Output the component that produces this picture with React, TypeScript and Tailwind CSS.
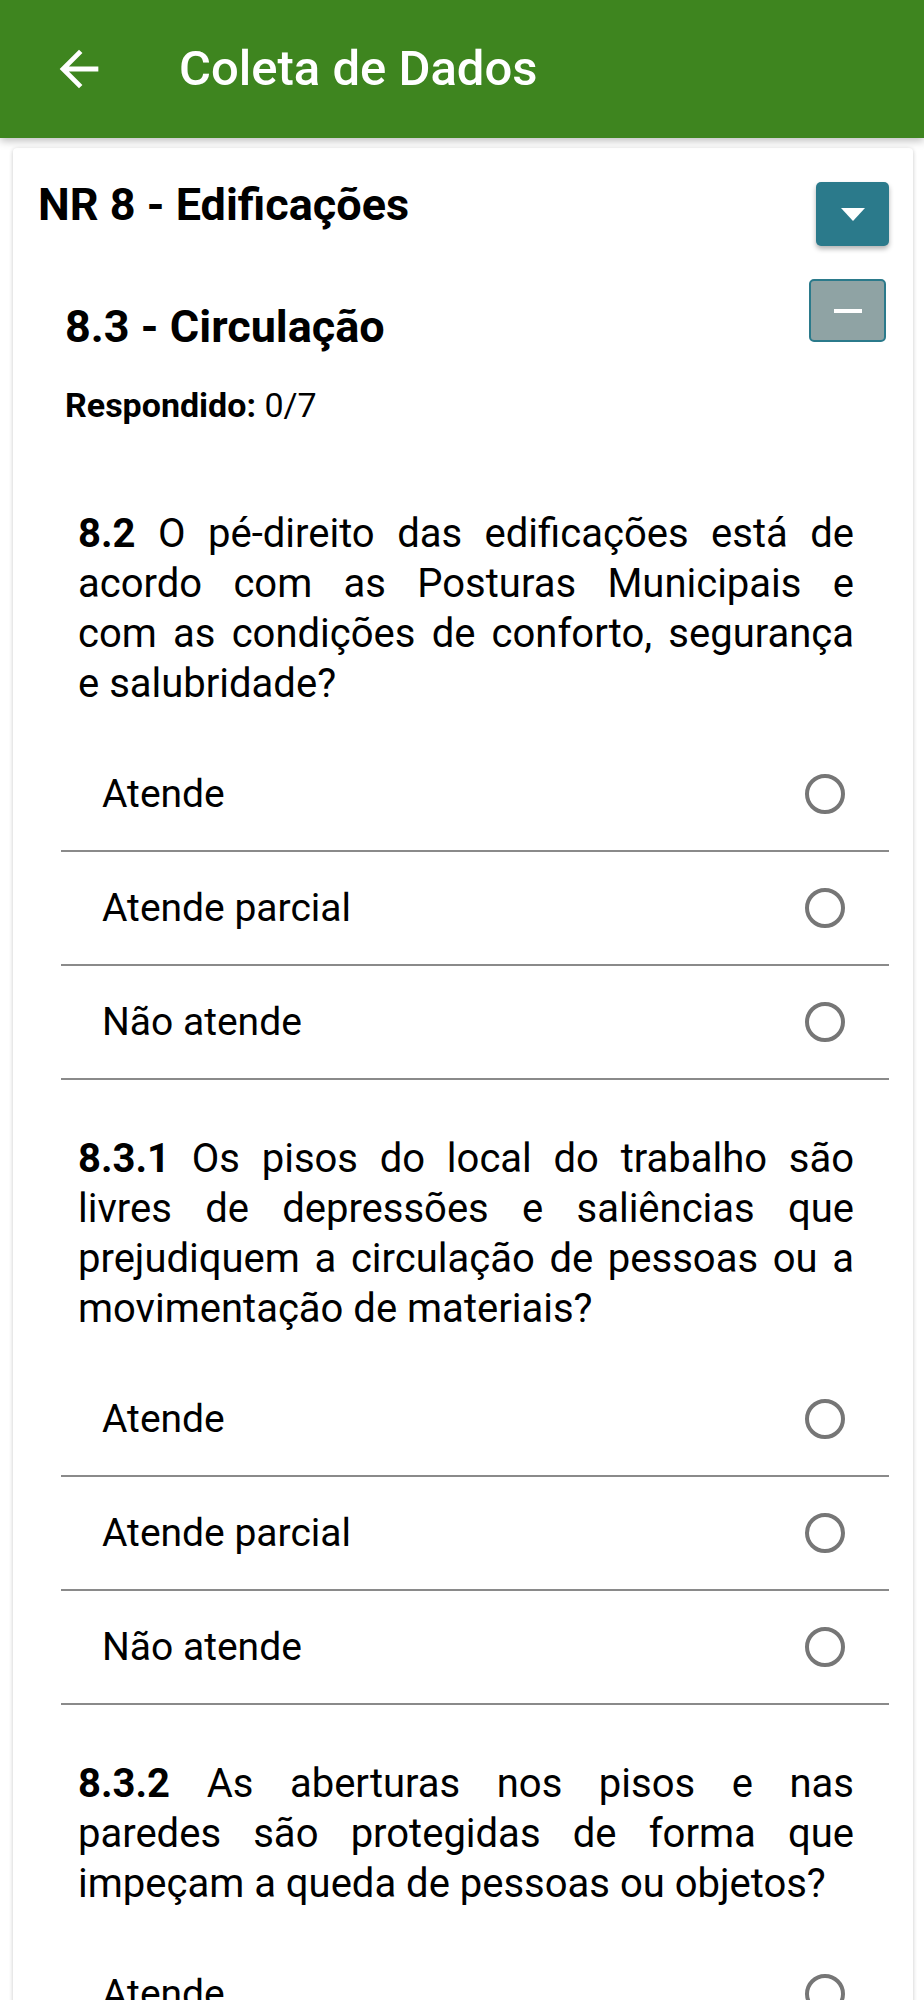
const questions = [
  {
    code: '8.2',
    lines: [
      'O pé-direito das edificações está de',
      'acordo com as Posturas Municipais e',
      'com as condições de conforto, segurança',
      'e salubridade?',
    ],
  },
  {
    code: '8.3.1',
    lines: [
      'Os pisos do local do trabalho são',
      'livres de depressões e saliências que',
      'prejudiquem a circulação de pessoas ou a',
      'movimentação de materiais?',
    ],
  },
  {
    code: '8.3.2',
    lines: [
      'As aberturas nos pisos e nas',
      'paredes são protegidas de forma que',
      'impeçam a queda de pessoas ou objetos?',
    ],
  },
];

const options = ['Atende', 'Atende parcial', 'Não atende'];

function Question({ code, lines, first }: { code: string; lines: string[]; first: boolean }) {
  return (
    <div className={first ? 'mt-[87px]' : 'mt-[54px]'}>
      <div className="pl-[17px] pr-[35px] mb-[29px] text-[40px] leading-[50px] text-black">
        {lines.map((line, i) => (
          <div
            key={i}
            className={i < lines.length - 1 ? 'whitespace-nowrap text-justify [text-align-last:justify]' : 'whitespace-nowrap'}
          >
            {i === 0 && <span className="font-bold">{code} </span>}
            {line}
          </div>
        ))}
      </div>
      {options.map((opt) => (
        <div
          key={opt}
          className="h-[114px] flex items-center justify-between pl-[41px] pr-[44px] border-b-2 border-[#8a8a8a]"
        >
          <span className="text-[39px] text-black">{opt}</span>
          <span className="w-[40px] h-[40px] rounded-full border-[4px] border-[#767676]" />
        </div>
      ))}
    </div>
  );
}

export default function App() {
  return (
    <div className="min-h-screen bg-white font-['Roboto',sans-serif]">
      <header className="relative z-10 h-[138px] bg-[#3e851f] flex items-center shadow-[0_3px_8px_rgba(0,0,0,0.25)]">
        <svg width="58" height="58" viewBox="0 0 24 24" className="ml-[50px]" fill="white">
          <path d="M20 11H7.83l5.59-5.59L12 4l-8 8 8 8 1.41-1.41L7.83 13H20v-2z" />
        </svg>
        <h1 className="ml-[71px] text-[49px] font-medium text-white">Coleta de Dados</h1>
      </header>

      <div className="mx-[13px] mt-[10px] mr-[11px] bg-white rounded-[4px] shadow-[0_1px_4px_rgba(0,0,0,0.22)] pl-[25px] pr-[24px] pt-[34px] pb-10">
        <div className="flex items-start justify-between">
          <h2 className="text-[45px] leading-[45px] font-bold text-black">NR 8 - Edificações</h2>
          <button className="w-[73px] h-[64px] rounded-[5px] bg-[#2b7a8b] flex items-center justify-center shadow-[0_3px_5px_rgba(0,0,0,0.3)]">
            <svg width="24" height="13" viewBox="0 0 24 13">
              <path d="M0 0h24L12 13z" fill="white" />
            </svg>
          </button>
        </div>

        <div className="ml-[27px]">
          <div className="mt-[33px] flex items-start justify-between">
            <h3 className="mt-[25px] text-[45px] leading-[45px] font-bold text-black">8.3 - Circulação</h3>
            <button className="mr-[3px] w-[77px] h-[63px] rounded-[5px] bg-[#8fa3a4] border-2 border-[#2b7a8b] flex items-center justify-center">
              <span className="block w-[28px] h-[4px] bg-white" />
            </button>
          </div>
          <p className="mt-[39px] text-[34px] leading-[34px] text-black">
            <span className="font-bold">Respondido:</span> 0/7
          </p>
        </div>

        <div className="ml-[23px]">
          {questions.map((q, i) => (
            <Question key={q.code} code={q.code} lines={q.lines} first={i === 0} />
          ))}
        </div>
      </div>
    </div>
  );
}
